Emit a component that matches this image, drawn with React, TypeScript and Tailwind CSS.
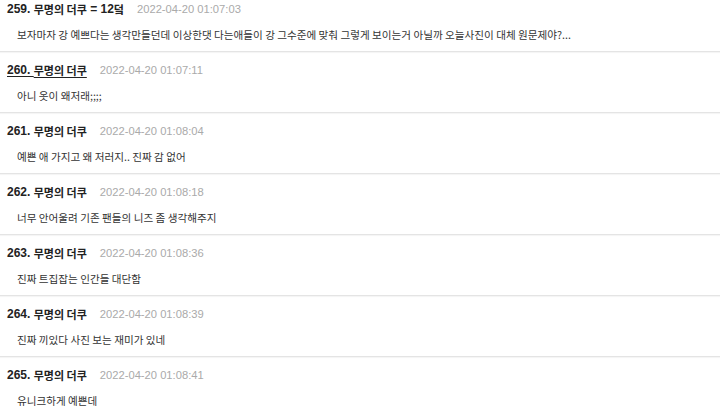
import React from "react";

type Item = { no: number; extra?: string; time: string; body: string; underline?: boolean };

const items: Item[] = [
  { no: 259, extra: " = 12덬", time: "2022-04-20 01:07:03", body: "보자마자 강 예쁘다는 생각만들던데 이상한댓 다는애들이 강 그수준에 맞춰 그렇게 보이는거 아닐까 오늘사진이 대체 원문제야?..." },
  { no: 260, time: "2022-04-20 01:07:11", body: "아니 옷이 왜저래;;;;", underline: true },
  { no: 261, time: "2022-04-20 01:08:04", body: "예쁜 애 가지고 왜 저러지.. 진짜 감 없어" },
  { no: 262, time: "2022-04-20 01:08:18", body: "너무 안어울려 기존 팬들의 니즈 좀 생각해주지" },
  { no: 263, time: "2022-04-20 01:08:36", body: "진짜 트집잡는 인간들 대단함" },
  { no: 264, time: "2022-04-20 01:08:39", body: "진짜 끼있다 사진 보는 재미가 있네" },
  { no: 265, time: "2022-04-20 01:08:41", body: "유니크하게 예쁜데" },
];

const sans = "font-['Liberation_Sans','Noto_Sans_CJK_KR',sans-serif]";
const kr = "font-['Noto_Sans_CJK_KR',sans-serif]";

export default function App() {
  return (
    <div className="w-[720px] h-[412px] overflow-hidden bg-white">
      <div className="-mt-[9px] flex flex-col">
        {items.map((it) => (
          <div
            key={it.no}
            className="h-[61px] shrink-0 box-border border-b border-[#e4e4e4] shadow-[0_1px_1px_rgba(0,0,0,0.04)] pt-[10px] flex flex-col"
          >
            <div className="flex items-center h-[16px] pl-[7px]">
              <span className={`flex items-center text-[#222] font-bold whitespace-nowrap ${it.underline ? "underline underline-offset-2 decoration-1" : ""}`}>
                <span className={`${sans} text-[12px] leading-[16px]`}>{it.no}.&nbsp;</span>
                <span className={`${kr} text-[11px] leading-[16px]`}>무명의 더쿠</span>
                {it.extra && (
                  <>
                    <span className={`${sans} text-[12px] leading-[16px]`}>&nbsp;= 12</span>
                    <span className={`${kr} text-[11px] leading-[16px]`}>덬</span>
                  </>
                )}
              </span>
              <span className={`${sans} ml-[13px] text-[11.2px] leading-[16px] text-[#aaaaaa]`}>{it.time}</span>
            </div>
            <div className={`${kr} mt-[10px] pl-[17px] text-[10.6px] leading-[16px] text-[#333] whitespace-nowrap`}>
              {it.body}
            </div>
          </div>
        ))}
      </div>
    </div>
  );
}
